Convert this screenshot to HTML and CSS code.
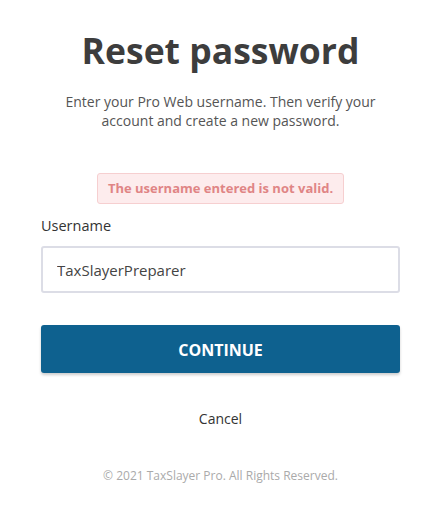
FILE: index.html
```html
<!DOCTYPE html>
<html lang="en">
<head>
  <meta charset="UTF-8" />
  <meta name="viewport" content="width=device-width, initial-scale=1.0"/>
  <title>Reset password</title>
  <link rel="stylesheet" href="styles.css">
</head>
<body>

<div class="card">

  <h1>Reset password</h1>

  <p class="intro">Enter your Pro Web username. Then verify your account and create a new password.</p>

  <div class="alert">The username entered is not valid.</div>

  <form class="form">
    <label for="username">Username</label>
    <input type="text" id="username" value="TaxSlayerPreparer"/>
    <button type="button" class="btn-continue">CONTINUE</button>
  </form>

  <a class="cancel" href="#">Cancel</a>

  <footer>&copy; 2021 TaxSlayer Pro. All Rights Reserved.</footer>
</div>

</body>
</html>
```

FILE: styles.css
```css
:root {
  --bg: #fff;
  --primary: #0e618f;
  --text: #404040;
}
* {
  box-sizing: border-box;
}
body {
  margin: 0;
  font-family: 'Open Sans', 'Noto Sans', sans-serif;
  background: var(--bg);
  color: var(--text);
}
.card {
  padding: 22px 40px 0 41px;
  display: flex;
  flex-direction: column;
  align-items: center;
}
h1 {
  margin: 0;
  font-size: 35.5px;
  line-height: 56px;
  font-weight: 700;
  color: #3d3d3d;
}
.intro {
  margin: 14px 0 0;
  width: 320px;
  font-size: 14px;
  line-height: 19px;
  text-align: center;
  color: #555;
}
.alert {
  margin-top: 43px;
  padding: 6px 10px;
  background: #fdeced;
  border: 1px solid #f6cfd0;
  border-radius: 3px;
  color: #e08585;
  font-size: 13px;
  font-weight: 700;
  line-height: 17px;
}
.form {
  width: 100%;
  display: flex;
  flex-direction: column;
  margin-top: 12px;
}
label {
  font-size: 14.5px;
  line-height: 20px;
  color: #333;
}
input[type="text"] {
  margin-top: 10px;
  width: 100%;
  height: 47px;
  padding: 0 14px;
  border: 2px solid #dcdde6;
  border-radius: 3px;
  font-family: inherit;
  font-size: 15px;
  color: #444;
  outline: none;
}
.btn-continue {
  margin-top: 32px;
  height: 48px;
  padding-top: 3px;
  background: var(--primary);
  color: #fff;
  border: none;
  border-radius: 3px;
  font-family: inherit;
  font-size: 16px;
  font-weight: 700;
  box-shadow: 0 2px 3px rgba(0,0,0,0.2);
  cursor: pointer;
}
.cancel {
  margin-top: 36px;
  font-size: 14px;
  line-height: 20px;
  color: #333;
  text-decoration: none;
}
footer {
  margin-top: 38px;
  font-size: 12px;
  line-height: 18px;
  color: #aaa;
}
```
